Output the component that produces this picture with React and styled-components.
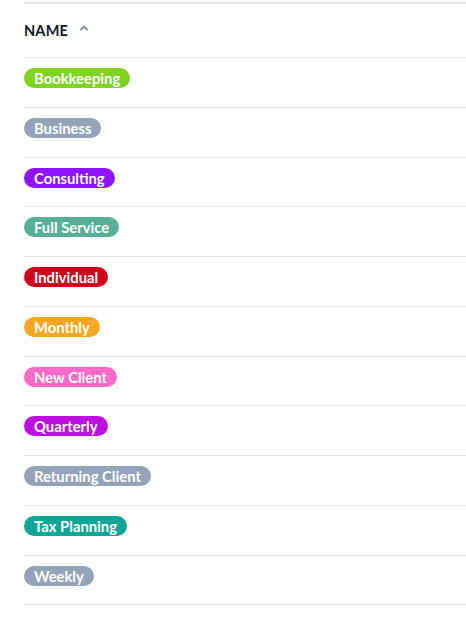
import React from 'react';
import styled, { createGlobalStyle } from 'styled-components';

const GlobalStyle = createGlobalStyle`
    html, body {
        margin: 0;
        padding: 0;
        background: #FFF;
    }
`;

const tags = [
    { title: 'Bookkeeping', color: '#7ED321' },
    { title: 'Business', color: '#94A3B8' },
    { title: 'Consulting', color: '#9013FE' },
    { title: 'Full Service', color: '#57AF97' },
    { title: 'Individual', color: '#D0021B' },
    { title: 'Monthly', color: '#F5A623' },
    { title: 'New Client', color: '#FF6AC6' },
    { title: 'Quarterly', color: '#BD10E0' },
    { title: 'Returning Client', color: '#94A3B8' },
    { title: 'Tax Planning', color: '#0FA597' },
    { title: 'Weekly', color: '#94A3B8' },
];

function App() {
    return (
        <>
            <GlobalStyle />
            <Page>
                <Table>
                    <HeaderRow>
                        <HeaderName>NAME</HeaderName>
                        <SortIcon width="10" height="8" viewBox="0 0 10 8">
                            <path d="M2 5.5L5 2.5L8 5.5" stroke="#8A94A6" strokeWidth="2" fill="none" strokeLinecap="round" strokeLinejoin="round" />
                        </SortIcon>
                    </HeaderRow>
                    {tags.map((item, index) => (
                        <Row key={index}>
                            <Badge color={item.color}>{item.title}</Badge>
                        </Row>
                    ))}
                </Table>
            </Page>
        </>
    );
}

export default App;

const Page = styled.div`
    padding: 2px 0 0 24px;
    font-family: 'Lato', 'Open Sans', sans-serif;
`;

const Table = styled.div`
    display: flex;
    flex-direction: column;
    border-top: 2px solid #E2E8F0;
`;

const HeaderRow = styled.div`
    display: flex;
    align-items: center;
    gap: 11px;
    height: 53px;
    border-bottom: 1px solid #E2E8F0;
`;

const HeaderName = styled.span`
    color: #111827;
    font-size: 14.5px;
    font-weight: 700;
    letter-spacing: 0.2px;
`;

const SortIcon = styled.svg`
    margin-top: -6px;
`;

const Row = styled.div`
    display: flex;
    align-items: flex-start;
    box-sizing: border-box;
    height: 49.75px;
    padding-top: 10px;
    border-bottom: 1px solid #E2E8F0;
`;

const Badge = styled.span`
    display: inline-flex;
    align-items: center;
    height: 20px;
    padding: 0 10px;
    border-radius: 10px;
    background: ${(props) => props.color};
    color: #FFF;
    font-size: 14.8px;
    font-weight: 700;
`;
